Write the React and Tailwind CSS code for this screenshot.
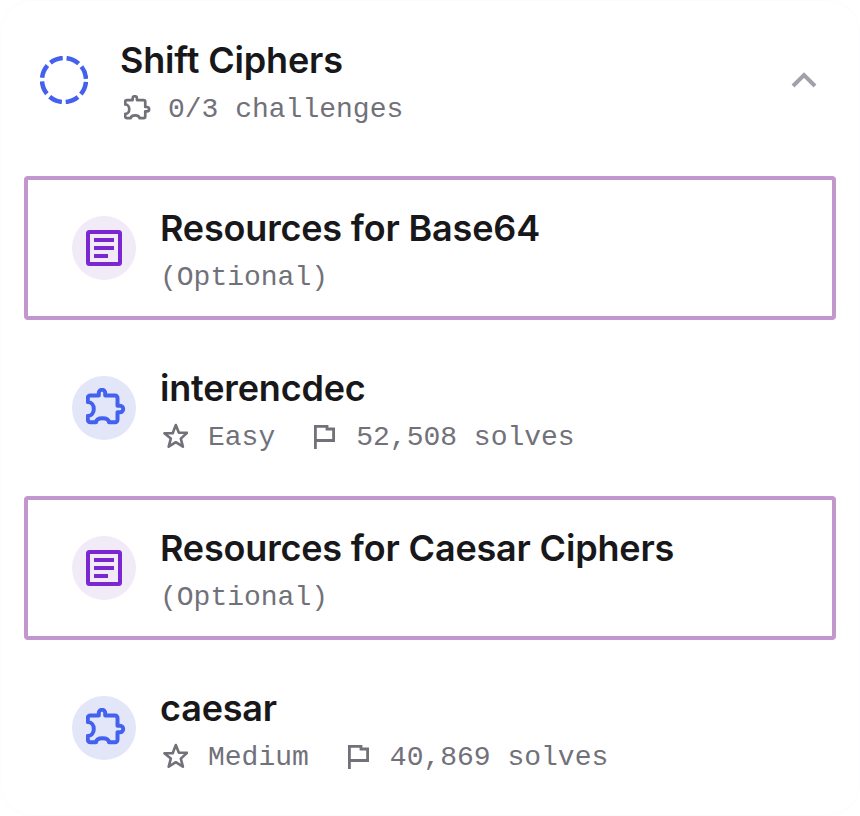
import React from 'react';

const items = [
  { type: 'resource', title: 'Resources for Base64' },
  { type: 'challenge', title: 'interencdec', level: 'Easy', solves: '52,508 solves' },
  { type: 'resource', title: 'Resources for Caesar Ciphers' },
  { type: 'challenge', title: 'caesar', level: 'Medium', solves: '40,869 solves' },
];

const DocIcon = () => (
  <svg width="36" height="36" viewBox="0 0 36 36" fill="none" stroke="#7b27d1">
    <rect x="2" y="2" width="32" height="32" rx="1.5" strokeWidth="4" />
    <path d="M8 10h20M8 18h20M8 26h14" strokeWidth="4" />
  </svg>
);

const PuzzleIcon = ({ className }) => (
  <svg viewBox="0 0 40 40" fill="none" stroke="currentColor" strokeWidth="4" strokeLinejoin="round" className={className}>
    <path d="M1.800 10a2.500 2.500 0 0 1 2.500-2.500h8.500V5a3.200 3.200 0 0 1 6.400 0v2.500H29a2.500 2.500 0 0 1 2.500 2.500v7.800H34a3.200 3.200 0 0 1 0 6.400h-2.500v7.500a2.500 2.500 0 0 1-2.500 2.500h-6c-.3-2.500-3-4-6.500-4s-6.200 1.500-6.500 4H4.300a2.500 2.500 0 0 1-2.500-2.500V28c3.500 0 6-3 6-7s-2.500-7-6-7Z" />
  </svg>
);

const StarIcon = () => (
  <svg viewBox="0 0 28 28" fill="none" stroke="#71717a" strokeWidth="2.6" strokeLinejoin="round" className="mr-5 -mt-1 h-7 w-7 shrink-0">
    <path d="M15.800 3 18.900 10.800H27.200L20.800 16.600 22.900 24.700 15.800 20.200 8.700 24.700 10.800 16.600 4.400 11.300H12.700Z" />
  </svg>
);

const FlagIcon = () => (
  <svg viewBox="0 0 28 28" fill="none" stroke="#71717a" strokeWidth="2.8" className="mr-[17px] ml-9 -mt-1 h-7 w-7 shrink-0">
    <path d="M4.400 27V4.400H16V7H22.600V18.500H4.400" />
  </svg>
);

const RowText = ({ title, children }) => (
  <div className="ml-6">
    <div className="text-[36px] leading-10 font-semibold tracking-[-0.18px] text-[#18181b]">{title}</div>
    <div className="mt-[10px] flex items-center font-['Liberation_Mono',monospace] text-[28px] leading-10 text-[#71717a]">
      {children}
    </div>
  </div>
);

const Row = ({ item }) => {
  const isResource = item.type === 'resource';
  return (
    <div
      className={`flex h-36 rounded-[4px] border-4 pt-7 pl-11 ${
        isResource ? 'border-[#c197cd]' : 'border-transparent'
      }`}
    >
      <div
        className={`mt-2 flex h-16 w-16 shrink-0 items-center justify-center rounded-full ${
          isResource ? 'bg-[#f1ebf8]' : 'bg-[#e3e6f8]'
        }`}
      >
        {isResource ? <DocIcon /> : <PuzzleIcon className="ml-1 h-10 w-10 text-[#4361ee]" />}
      </div>
      {isResource ? (
        <RowText title={item.title}>(Optional)</RowText>
      ) : (
        <RowText title={item.title}>
          <StarIcon />
          <span>{item.level}</span>
          <FlagIcon />
          <span>{item.solves}</span>
        </RowText>
      )}
    </div>
  );
};

export default function App() {
  return (
    <div className="h-[816px] w-[860px] rounded-[32px] border border-[#fcfcfe] bg-white px-[23px] pt-[39px] font-['Inter',sans-serif]">
      <div className="flex items-start pr-[18px] pl-4">
        <svg width="48" height="48" viewBox="0 0 48 48" fill="none" className="mt-4 shrink-0">
          <circle cx="24" cy="24" r="22" stroke="#4361ee" strokeWidth="4.5" strokeDasharray="13.28 4" strokeDashoffset="-2" />
        </svg>
        <div className="ml-8 flex-1">
          <div className="text-[36px] leading-10 font-semibold tracking-[-0.18px] text-[#18181b]">Shift Ciphers</div>
          <div className="mt-[10px] flex items-center font-['Liberation_Mono',monospace] text-[28px] leading-10 text-[#71717a]">
            <PuzzleIcon className="mr-[17px] ml-1 -mt-1 h-[27px] w-[27px]" />
            <span>0/3 challenges</span>
          </div>
        </div>
        <svg width="28" height="18" viewBox="0 0 28 18" fill="none" stroke="#a1a1aa" strokeWidth="4" className="mt-[31px]">
          <path d="M3 15 14 4l11 11" />
        </svg>
      </div>
      <div className="mt-[46px] flex flex-col gap-4">
        {items.map((item) => (
          <Row key={item.title} item={item} />
        ))}
      </div>
    </div>
  );
}
